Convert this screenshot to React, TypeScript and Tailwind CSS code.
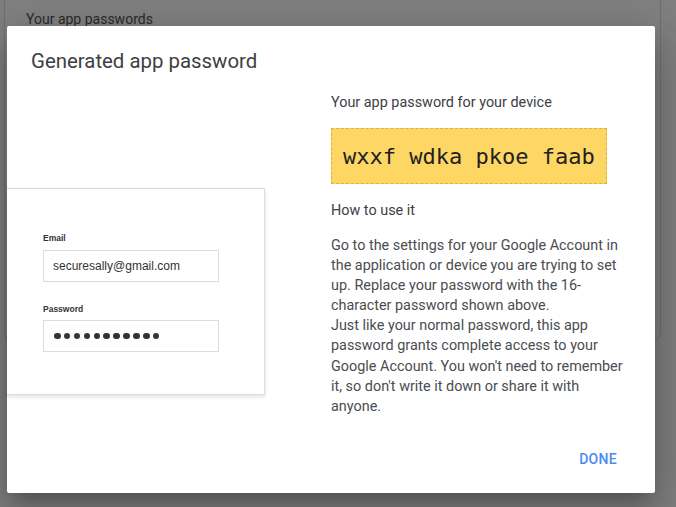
import React from "react";

export default function App() {
  const roboto = { fontFamily: "Roboto, 'Noto Sans', sans-serif" };
  return (
    <div className="relative h-[507px] w-[676px] overflow-hidden bg-[#7f7f7f]" style={roboto}>
      {/* underlying page card (dimmed by scrim) */}
      <div className="ml-[4px] mt-[-20px] h-[361px] w-[657px] rounded-[8px] border border-[#6f6f6f] bg-[#808080] pl-[21px] pt-[28px]">
        <div className="text-[14px] leading-[20px] text-[#2a2a2a]">Your app passwords</div>
      </div>

      {/* dialog */}
      <div className="absolute left-[7px] top-[26px] flex h-[467px] w-[648px] flex-col rounded-[2px] bg-white shadow-[0_11px_15px_-7px_rgba(0,0,0,0.2),0_24px_38px_3px_rgba(0,0,0,0.14),0_9px_46px_8px_rgba(0,0,0,0.12)]">
        <div className="px-[24px] pt-[21px] text-[20.4px] leading-[28px] text-[#3c4043]">Generated app password</div>
        <div className="flex flex-1">
          <div className="w-[324px] shrink-0 pt-[113px]">
            <div className="h-[207px] w-[258px] border border-l-0 border-[#dcdcdc] bg-white pl-[36px] pt-[44px] shadow-[0_2px_4px_rgba(0,0,0,0.12)]" style={{ fontFamily: "'Liberation Sans', Arial, sans-serif" }}>
              <div className="text-[8.5px] font-semibold leading-[11px] text-[#333]">Email</div>
              <div className="mt-[6px] flex h-[32px] w-[176px] items-center border border-[#dcdcdc] pl-[9px] text-[12px] text-[#333]">
                securesally@gmail.com
              </div>
              <div className="mt-[22px] text-[8.5px] font-semibold leading-[11px] text-[#333]">Password</div>
              <div className="mt-[5px] flex h-[32px] w-[176px] items-center gap-[3.4px] border border-[#dcdcdc] pl-[10px]">
                {Array.from({ length: 11 }).map((_, i) => (
                  <div key={i} className="h-[6.5px] w-[6.5px] rounded-full bg-[#333]" />
                ))}
              </div>
            </div>
          </div>
          <div className="w-[294px] pt-[18px]">
            <div className="text-[14.4px] leading-[20px] text-[#3c4043]">Your app password for your device</div>
            <div
              className="mt-[15px] flex h-[56px] w-[276px] items-center border border-dashed border-[#dcb33d] bg-[#fdd663] pl-[11px] text-[22px] text-[#202124]"
              style={{ fontFamily: "'DejaVu Sans Mono', monospace" }}
            >
              wxxf wdka pkoe faab
            </div>
            <div className="mt-[17px] text-[14.4px] leading-[20px] text-[#3c4043]">How to use it</div>
            <div className="mt-[15px] text-[14.4px] leading-[20.1px] text-[#4a4d51]">
              Go to the settings for your Google Account in the application or device you are trying to set up. Replace your password with the 16-character password shown above.
              <br />
              Just like your normal password, this app password grants complete access to your Google Account. You won't need to remember it, so don't write it down or share it with anyone.
            </div>
          </div>
        </div>
        <div className="flex justify-end pb-[25px] pr-[38px]">
          <div className="text-[14px] font-medium leading-[18px] tracking-[0.3px] text-[#4a8af4]">DONE</div>
        </div>
      </div>
    </div>
  );
}
